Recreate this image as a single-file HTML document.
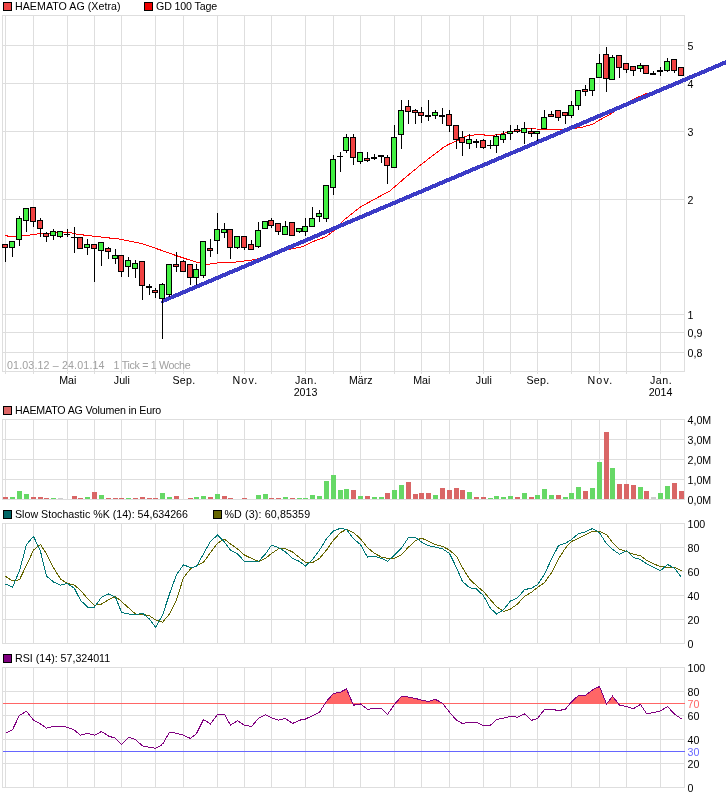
<!DOCTYPE html>
<html><head><meta charset="utf-8"><title>HAEMATO AG Chart</title>
<style>html,body{margin:0;padding:0;background:#fff}svg{display:block;will-change:transform}text{white-space:pre}</style></head>
<body>
<svg width="726" height="796" viewBox="0 0 726 796" shape-rendering="crispEdges" font-family="'Liberation Sans', Arial, sans-serif" font-size="10.67px">
<rect x="0" y="0" width="726" height="796" fill="#ffffff"/>
<g stroke="#dedede" stroke-width="1" fill="none"><line x1="5.5" y1="15.5" x2="5.5" y2="373.5"/><line x1="33.5" y1="15.5" x2="33.5" y2="373.5"/><line x1="67.5" y1="15.5" x2="67.5" y2="373.5"/><line x1="94.5" y1="15.5" x2="94.5" y2="373.5"/><line x1="121.5" y1="15.5" x2="121.5" y2="373.5"/><line x1="155.5" y1="15.5" x2="155.5" y2="373.5"/><line x1="183.5" y1="15.5" x2="183.5" y2="373.5"/><line x1="217.5" y1="15.5" x2="217.5" y2="373.5"/><line x1="244.5" y1="15.5" x2="244.5" y2="373.5"/><line x1="271.5" y1="15.5" x2="271.5" y2="373.5"/><line x1="305.5" y1="15.5" x2="305.5" y2="373.5"/><line x1="333.5" y1="15.5" x2="333.5" y2="373.5"/><line x1="360.5" y1="15.5" x2="360.5" y2="373.5"/><line x1="394.5" y1="15.5" x2="394.5" y2="373.5"/><line x1="421.5" y1="15.5" x2="421.5" y2="373.5"/><line x1="449.5" y1="15.5" x2="449.5" y2="373.5"/><line x1="483.5" y1="15.5" x2="483.5" y2="373.5"/><line x1="510.5" y1="15.5" x2="510.5" y2="373.5"/><line x1="537.5" y1="15.5" x2="537.5" y2="373.5"/><line x1="571.5" y1="15.5" x2="571.5" y2="373.5"/><line x1="599.5" y1="15.5" x2="599.5" y2="373.5"/><line x1="626.5" y1="15.5" x2="626.5" y2="373.5"/><line x1="660.5" y1="15.5" x2="660.5" y2="373.5"/><line x1="2.5" y1="45.5" x2="684.5" y2="45.5"/><line x1="2.5" y1="83.5" x2="684.5" y2="83.5"/><line x1="2.5" y1="131.5" x2="684.5" y2="131.5"/><line x1="2.5" y1="199.5" x2="684.5" y2="199.5"/><line x1="2.5" y1="314.5" x2="684.5" y2="314.5"/><line x1="2.5" y1="332.5" x2="684.5" y2="332.5"/><line x1="2.5" y1="352.5" x2="684.5" y2="352.5"/><rect x="2.5" y="15.5" width="682.0" height="356.0"/></g>
<text x="7" y="369" fill="#a0a0a0" textLength="97.5">01.03.12 – 24.01.14</text>
<text x="113.6" y="369" fill="#a0a0a0" textLength="77">1 Tick = 1 Woche</text>
<polyline fill="none" stroke="#ff0000" stroke-width="1" points="5.5,235.5 9.5,236.5 16.0,236.5 22.0,235.5 29.0,235.5 31.0,234.5 36.0,234.5 38.0,233.5 50.0,233.3 66.0,232.4 70.0,232.5 77.0,234.3 89.0,235.6 94.0,236.2 104.0,237.4 113.0,238.4 118.0,238.8 126.5,240.6 143.0,243.9 159.6,249.7 176.0,255.5 192.6,261.0 200.0,263.0 207.5,264.3 217.4,263.0 230.0,262.4 236.5,262.0 253.0,259.9 269.6,255.8 286.0,250.0 302.6,246.7 312.6,241.7 325.8,236.8 335.7,229.3 344.0,220.0 359.8,207.4 374.6,199.1 389.5,191.2 404.4,178.4 419.3,166.0 434.1,154.5 444.0,147.0 450.0,143.7 456.5,141.0 464.8,136.9 469.8,135.2 481.3,134.7 489.6,135.5 497.9,134.7 506.0,132.7 517.7,130.7 526.0,129.0 532.6,128.1 535.9,129.0 560.0,129.4 565.0,129.4 574.8,128.3 583.0,127.0 593.0,124.1 599.6,120.0 611.2,113.6 620.0,108.0 628.0,102.6 633.0,99.4 640.0,96.3 648.0,93.0 651.0,93.0 668.0,86.8 681.0,81.5"/>
<polygon fill="#3b3bc6" stroke="none" points="160.50,302.46 163.50,298.49 727.00,59.59 727.00,63.99 162.00,303.53"/>
<g stroke="#000000" stroke-width="1"><line x1="5.5" y1="244" x2="5.5" y2="262"/><rect x="2.5" y="244.5" width="5" height="3" fill="#f04242"/><line x1="12.5" y1="242" x2="12.5" y2="257"/><rect x="9.5" y="241.5" width="5" height="6" fill="#42f042"/><line x1="19.5" y1="216" x2="19.5" y2="246"/><rect x="16.5" y="218.5" width="5" height="21" fill="#42f042"/><line x1="26.5" y1="208" x2="26.5" y2="232"/><rect x="23.5" y="208.5" width="5" height="12" fill="#42f042"/><line x1="33.5" y1="207" x2="33.5" y2="227"/><rect x="30.5" y="207.5" width="5" height="14" fill="#f04242"/><line x1="40.5" y1="218" x2="40.5" y2="237"/><rect x="37.5" y="220.5" width="5" height="8" fill="#f04242"/><line x1="46.5" y1="232" x2="46.5" y2="242"/><rect x="43.5" y="233.5" width="5" height="3" fill="#f04242"/><line x1="53.5" y1="229" x2="53.5" y2="240"/><rect x="50.5" y="231.5" width="5" height="4" fill="#42f042"/><line x1="60.5" y1="232" x2="60.5" y2="238"/><rect x="57.5" y="231.5" width="5" height="5" fill="#42f042"/><line x1="67.5" y1="229" x2="67.5" y2="237"/><line x1="64.0" y1="234.5" x2="70.0" y2="234.5"/><line x1="74.5" y1="227" x2="74.5" y2="253"/><line x1="71.0" y1="237.5" x2="77.0" y2="237.5"/><line x1="80.5" y1="238" x2="80.5" y2="249"/><rect x="77.5" y="237.5" width="5" height="11" fill="#f04242"/><line x1="87.5" y1="239" x2="87.5" y2="255"/><rect x="84.5" y="244.5" width="5" height="3" fill="#42f042"/><line x1="94.5" y1="244" x2="94.5" y2="282"/><rect x="91.5" y="244.5" width="5" height="4" fill="#f04242"/><line x1="101.5" y1="242" x2="101.5" y2="266"/><rect x="98.5" y="242.5" width="5" height="8" fill="#42f042"/><line x1="108.5" y1="247" x2="108.5" y2="259"/><rect x="105.5" y="248.5" width="5" height="3" fill="#f04242"/><line x1="115.5" y1="249" x2="115.5" y2="264"/><rect x="112.5" y="255.5" width="5" height="3" fill="#42f042"/><line x1="121.5" y1="255" x2="121.5" y2="277"/><rect x="118.5" y="255.5" width="5" height="16" fill="#f04242"/><line x1="128.5" y1="257" x2="128.5" y2="277"/><rect x="125.5" y="260.5" width="5" height="6" fill="#42f042"/><line x1="135.5" y1="260" x2="135.5" y2="278"/><rect x="132.5" y="263.5" width="5" height="5" fill="#42f042"/><line x1="142.5" y1="261" x2="142.5" y2="300"/><rect x="139.5" y="261.5" width="5" height="24" fill="#f04242"/><line x1="149.5" y1="284" x2="149.5" y2="295"/><line x1="146.0" y1="287" x2="152.0" y2="287" stroke-width="2"/><line x1="155.5" y1="288" x2="155.5" y2="298"/><rect x="152.5" y="290.5" width="5" height="2" fill="#f04242"/><line x1="162.5" y1="283" x2="162.5" y2="339"/><rect x="159.5" y="284.5" width="5" height="14" fill="#42f042"/><line x1="169.5" y1="264" x2="169.5" y2="297"/><rect x="166.5" y="264.5" width="5" height="30" fill="#42f042"/><line x1="176.5" y1="252" x2="176.5" y2="272"/><rect x="173.5" y="264.5" width="5" height="2" fill="#f04242"/><line x1="183.5" y1="260" x2="183.5" y2="272"/><rect x="180.5" y="261.5" width="5" height="10" fill="#f04242"/><line x1="190.5" y1="264" x2="190.5" y2="285"/><rect x="187.5" y="264.5" width="5" height="13" fill="#f04242"/><line x1="196.5" y1="264" x2="196.5" y2="285"/><rect x="193.5" y="269.5" width="5" height="8" fill="#42f042"/><line x1="203.5" y1="241" x2="203.5" y2="278"/><rect x="200.5" y="241.5" width="5" height="34" fill="#42f042"/><line x1="210.5" y1="239" x2="210.5" y2="257"/><rect x="207.5" y="248.5" width="5" height="2" fill="#f04242"/><line x1="217.5" y1="213" x2="217.5" y2="254"/><rect x="214.5" y="229.5" width="5" height="11" fill="#42f042"/><line x1="224.5" y1="223" x2="224.5" y2="238"/><rect x="221.5" y="229.5" width="5" height="3" fill="#42f042"/><line x1="230.5" y1="229" x2="230.5" y2="259"/><rect x="227.5" y="229.5" width="5" height="18" fill="#f04242"/><line x1="237.5" y1="236" x2="237.5" y2="249"/><rect x="234.5" y="236.5" width="5" height="11" fill="#42f042"/><line x1="244.5" y1="236" x2="244.5" y2="250"/><rect x="241.5" y="236.5" width="5" height="11" fill="#f04242"/><line x1="251.5" y1="240" x2="251.5" y2="250"/><rect x="248.5" y="244.5" width="5" height="5" fill="#f04242"/><line x1="258.5" y1="222" x2="258.5" y2="248"/><rect x="255.5" y="230.5" width="5" height="16" fill="#42f042"/><line x1="265.5" y1="221" x2="265.5" y2="229"/><rect x="262.5" y="221.5" width="5" height="7" fill="#42f042"/><line x1="271.5" y1="218" x2="271.5" y2="228"/><rect x="268.5" y="220.5" width="5" height="5" fill="#f04242"/><line x1="278.5" y1="224" x2="278.5" y2="235"/><rect x="275.5" y="223.5" width="5" height="8" fill="#f04242"/><line x1="285.5" y1="221" x2="285.5" y2="234"/><rect x="282.5" y="226.5" width="5" height="8" fill="#42f042"/><line x1="292.5" y1="222" x2="292.5" y2="236"/><rect x="289.5" y="222.5" width="5" height="13" fill="#f04242"/><line x1="299.5" y1="228" x2="299.5" y2="233"/><rect x="296.5" y="228.5" width="5" height="3" fill="#42f042"/><line x1="305.5" y1="218" x2="305.5" y2="236"/><rect x="302.5" y="226.5" width="5" height="5" fill="#42f042"/><line x1="312.5" y1="207" x2="312.5" y2="226"/><rect x="309.5" y="218.5" width="5" height="8" fill="#42f042"/><line x1="319.5" y1="210" x2="319.5" y2="222"/><rect x="316.5" y="213.5" width="5" height="3" fill="#42f042"/><line x1="326.5" y1="185" x2="326.5" y2="222"/><rect x="323.5" y="185.5" width="5" height="33" fill="#42f042"/><line x1="333.5" y1="155" x2="333.5" y2="195"/><rect x="330.5" y="159.5" width="5" height="28" fill="#42f042"/><line x1="340.5" y1="152" x2="340.5" y2="172"/><line x1="337.0" y1="156.5" x2="343.0" y2="156.5"/><line x1="346.5" y1="134" x2="346.5" y2="153"/><rect x="343.5" y="137.5" width="5" height="13" fill="#42f042"/><line x1="353.5" y1="134" x2="353.5" y2="165"/><rect x="350.5" y="137.5" width="5" height="20" fill="#f04242"/><line x1="360.5" y1="152" x2="360.5" y2="164"/><rect x="357.5" y="152.5" width="5" height="9" fill="#42f042"/><line x1="367.5" y1="152" x2="367.5" y2="162"/><rect x="364.5" y="158.5" width="5" height="2" fill="#f04242"/><line x1="374.5" y1="154" x2="374.5" y2="160"/><line x1="371.0" y1="158" x2="377.0" y2="158" stroke-width="2"/><line x1="381.5" y1="156" x2="381.5" y2="163"/><line x1="378.0" y1="156" x2="384.0" y2="156" stroke-width="2"/><line x1="387.5" y1="155" x2="387.5" y2="184"/><rect x="384.5" y="157.5" width="5" height="8" fill="#f04242"/><line x1="394.5" y1="125" x2="394.5" y2="167"/><rect x="391.5" y="137.5" width="5" height="30" fill="#42f042"/><line x1="401.5" y1="100" x2="401.5" y2="149"/><rect x="398.5" y="110.5" width="5" height="24" fill="#42f042"/><line x1="408.5" y1="100" x2="408.5" y2="124"/><rect x="405.5" y="106.5" width="5" height="5" fill="#f04242"/><line x1="415.5" y1="109" x2="415.5" y2="124"/><rect x="412.5" y="110.5" width="5" height="2" fill="#f04242"/><line x1="421.5" y1="107" x2="421.5" y2="123"/><rect x="418.5" y="112.5" width="5" height="3" fill="#f04242"/><line x1="428.5" y1="100" x2="428.5" y2="121"/><line x1="425.0" y1="116" x2="431.0" y2="116" stroke-width="2"/><line x1="435.5" y1="110" x2="435.5" y2="119"/><rect x="432.5" y="112.5" width="5" height="3" fill="#42f042"/><line x1="442.5" y1="108" x2="442.5" y2="124"/><line x1="439.0" y1="116" x2="445.0" y2="116" stroke-width="2"/><line x1="449.5" y1="110" x2="449.5" y2="132"/><rect x="446.5" y="114.5" width="5" height="11" fill="#f04242"/><line x1="456.5" y1="126" x2="456.5" y2="149"/><rect x="453.5" y="125.5" width="5" height="14" fill="#f04242"/><line x1="462.5" y1="131" x2="462.5" y2="156"/><rect x="459.5" y="137.5" width="5" height="5" fill="#f04242"/><line x1="469.5" y1="134" x2="469.5" y2="149"/><rect x="466.5" y="139.5" width="5" height="4" fill="#42f042"/><line x1="476.5" y1="139" x2="476.5" y2="148"/><line x1="473.0" y1="142" x2="479.0" y2="142" stroke-width="2"/><line x1="483.5" y1="139" x2="483.5" y2="149"/><rect x="480.5" y="140.5" width="5" height="7" fill="#f04242"/><line x1="490.5" y1="140" x2="490.5" y2="149"/><line x1="487.0" y1="145.5" x2="493.0" y2="145.5"/><line x1="496.5" y1="134" x2="496.5" y2="153"/><rect x="493.5" y="136.5" width="5" height="9" fill="#42f042"/><line x1="503.5" y1="131" x2="503.5" y2="143"/><rect x="500.5" y="134.5" width="5" height="5" fill="#42f042"/><line x1="510.5" y1="125" x2="510.5" y2="140"/><rect x="507.5" y="131.5" width="5" height="2" fill="#42f042"/><line x1="517.5" y1="125" x2="517.5" y2="133"/><rect x="514.5" y="129.5" width="5" height="2" fill="#f04242"/><line x1="524.5" y1="122" x2="524.5" y2="144"/><rect x="521.5" y="128.5" width="5" height="4" fill="#42f042"/><line x1="531.5" y1="128" x2="531.5" y2="137"/><rect x="528.5" y="131.5" width="5" height="2" fill="#f04242"/><line x1="537.5" y1="131" x2="537.5" y2="141"/><rect x="534.5" y="131.5" width="5" height="2" fill="#42f042"/><line x1="544.5" y1="110" x2="544.5" y2="128"/><rect x="541.5" y="117.5" width="5" height="11" fill="#42f042"/><line x1="551.5" y1="111" x2="551.5" y2="116"/><rect x="548.5" y="114.5" width="5" height="2" fill="#f04242"/><line x1="558.5" y1="110" x2="558.5" y2="121"/><rect x="555.5" y="110.5" width="5" height="7" fill="#f04242"/><line x1="565.5" y1="113" x2="565.5" y2="124"/><rect x="562.5" y="112.5" width="5" height="3" fill="#f04242"/><line x1="571.5" y1="101" x2="571.5" y2="118"/><rect x="568.5" y="105.5" width="5" height="10" fill="#42f042"/><line x1="578.5" y1="91" x2="578.5" y2="110"/><rect x="575.5" y="90.5" width="5" height="15" fill="#42f042"/><line x1="585.5" y1="85" x2="585.5" y2="96"/><rect x="582.5" y="89.5" width="5" height="2" fill="#f04242"/><line x1="592.5" y1="78" x2="592.5" y2="96"/><rect x="589.5" y="78.5" width="5" height="12" fill="#42f042"/><line x1="599.5" y1="54" x2="599.5" y2="77"/><rect x="596.5" y="63.5" width="5" height="14" fill="#42f042"/><line x1="606.5" y1="47" x2="606.5" y2="92"/><rect x="603.5" y="54.5" width="5" height="24" fill="#f04242"/><line x1="612.5" y1="55" x2="612.5" y2="79"/><rect x="609.5" y="57.5" width="5" height="22" fill="#42f042"/><line x1="619.5" y1="55" x2="619.5" y2="78"/><rect x="616.5" y="55.5" width="5" height="12" fill="#f04242"/><line x1="626.5" y1="64" x2="626.5" y2="73"/><rect x="623.5" y="63.5" width="5" height="6" fill="#f04242"/><line x1="633.5" y1="67" x2="633.5" y2="76"/><rect x="630.5" y="66.5" width="5" height="4" fill="#f04242"/><line x1="640.5" y1="63" x2="640.5" y2="72"/><rect x="637.5" y="65.5" width="5" height="3" fill="#42f042"/><line x1="646.5" y1="66" x2="646.5" y2="74"/><rect x="643.5" y="65.5" width="5" height="8" fill="#f04242"/><line x1="653.5" y1="71" x2="653.5" y2="74"/><line x1="650.0" y1="74" x2="656.0" y2="74" stroke-width="2"/><line x1="660.5" y1="67" x2="660.5" y2="76"/><line x1="657.0" y1="71" x2="663.0" y2="71" stroke-width="2"/><line x1="667.5" y1="58" x2="667.5" y2="72"/><rect x="664.5" y="61.5" width="5" height="9" fill="#42f042"/><line x1="674.5" y1="59" x2="674.5" y2="73"/><rect x="671.5" y="59.5" width="5" height="11" fill="#f04242"/><line x1="681.5" y1="67" x2="681.5" y2="76"/><rect x="678.5" y="67.5" width="5" height="8" fill="#f04242"/></g>
<rect x="3.5" y="2.5" width="8" height="8" fill="#ee4444" stroke="#000"/>
<text x="15" y="10" textLength="105.5">HAEMATO AG (Xetra)</text>
<rect x="144.5" y="2.5" width="8" height="8" fill="#ee0000" stroke="#000"/>
<text x="156" y="10" textLength="61.2">GD 100 Tage</text>
<text x="687.5" y="50.0">5</text>
<text x="687.5" y="88.0">4</text>
<text x="687.5" y="136.0">3</text>
<text x="687.5" y="204.0">2</text>
<text x="687.5" y="319.0">1</text>
<text x="687.5" y="337.0">0,9</text>
<text x="687.5" y="357.0">0,8</text>
<text x="67.8" y="384" text-anchor="middle">Mai</text>
<text x="121.8" y="384" text-anchor="middle">Juli</text>
<text x="183.8" y="384" text-anchor="middle" textLength="22.6">Sep.</text>
<text x="244.8" y="384" text-anchor="middle" textLength="24.6">Nov.</text>
<text x="305.8" y="384" text-anchor="middle" textLength="21.8">Jan.</text>
<text x="360.8" y="384" text-anchor="middle">März</text>
<text x="421.8" y="384" text-anchor="middle">Mai</text>
<text x="483.8" y="384" text-anchor="middle">Juli</text>
<text x="537.8" y="384" text-anchor="middle" textLength="22.6">Sep.</text>
<text x="599.8" y="384" text-anchor="middle" textLength="24.6">Nov.</text>
<text x="660.8" y="384" text-anchor="middle" textLength="21.8">Jan.</text>
<text x="305.5" y="396" text-anchor="middle">2013</text>
<text x="660.5" y="396" text-anchor="middle">2014</text>
<rect x="3.5" y="406.5" width="8" height="8" fill="#dd6666" stroke="#000"/>
<text x="15" y="414" textLength="146.3">HAEMATO AG Volumen in Euro</text>
<g stroke="#dedede" stroke-width="1" fill="none"><line x1="5.5" y1="419.5" x2="5.5" y2="499.5"/><line x1="33.5" y1="419.5" x2="33.5" y2="499.5"/><line x1="67.5" y1="419.5" x2="67.5" y2="499.5"/><line x1="94.5" y1="419.5" x2="94.5" y2="499.5"/><line x1="121.5" y1="419.5" x2="121.5" y2="499.5"/><line x1="155.5" y1="419.5" x2="155.5" y2="499.5"/><line x1="183.5" y1="419.5" x2="183.5" y2="499.5"/><line x1="217.5" y1="419.5" x2="217.5" y2="499.5"/><line x1="244.5" y1="419.5" x2="244.5" y2="499.5"/><line x1="271.5" y1="419.5" x2="271.5" y2="499.5"/><line x1="305.5" y1="419.5" x2="305.5" y2="499.5"/><line x1="333.5" y1="419.5" x2="333.5" y2="499.5"/><line x1="360.5" y1="419.5" x2="360.5" y2="499.5"/><line x1="394.5" y1="419.5" x2="394.5" y2="499.5"/><line x1="421.5" y1="419.5" x2="421.5" y2="499.5"/><line x1="449.5" y1="419.5" x2="449.5" y2="499.5"/><line x1="483.5" y1="419.5" x2="483.5" y2="499.5"/><line x1="510.5" y1="419.5" x2="510.5" y2="499.5"/><line x1="537.5" y1="419.5" x2="537.5" y2="499.5"/><line x1="571.5" y1="419.5" x2="571.5" y2="499.5"/><line x1="599.5" y1="419.5" x2="599.5" y2="499.5"/><line x1="626.5" y1="419.5" x2="626.5" y2="499.5"/><line x1="660.5" y1="419.5" x2="660.5" y2="499.5"/><line x1="2.5" y1="439.5" x2="684.5" y2="439.5"/><line x1="2.5" y1="459.5" x2="684.5" y2="459.5"/><line x1="2.5" y1="479.5" x2="684.5" y2="479.5"/><rect x="2.5" y="419.5" width="682.0" height="80.0"/></g>
<g stroke="none"><rect x="3" y="497" width="5" height="2" fill="#d96666"/><rect x="10" y="497" width="5" height="2" fill="#66d866"/><rect x="17" y="491" width="5" height="8" fill="#66d866"/><rect x="24" y="494" width="5" height="5" fill="#66d866"/><rect x="31" y="497" width="5" height="2" fill="#d96666"/><rect x="38" y="497" width="5" height="2" fill="#d96666"/><rect x="44" y="498" width="5" height="1" fill="#d96666"/><rect x="51" y="498" width="5" height="1" fill="#66d866"/><rect x="58" y="498" width="5" height="1" fill="#cccccc"/><rect x="72" y="496" width="5" height="3" fill="#d96666"/><rect x="78" y="498" width="5" height="1" fill="#d96666"/><rect x="85" y="497" width="5" height="2" fill="#66d866"/><rect x="92" y="492" width="5" height="7" fill="#d96666"/><rect x="99" y="495" width="5" height="4" fill="#66d866"/><rect x="106" y="498" width="5" height="1" fill="#d96666"/><rect x="113" y="498" width="5" height="1" fill="#d96666"/><rect x="119" y="498" width="5" height="1" fill="#d96666"/><rect x="126" y="498" width="5" height="1" fill="#66d866"/><rect x="133" y="498" width="5" height="1" fill="#d96666"/><rect x="140" y="497" width="5" height="2" fill="#d96666"/><rect x="147" y="498" width="5" height="1" fill="#d96666"/><rect x="153" y="498" width="5" height="1" fill="#d96666"/><rect x="160" y="493" width="5" height="6" fill="#66d866"/><rect x="167" y="497" width="5" height="2" fill="#66d866"/><rect x="174" y="496" width="5" height="3" fill="#d96666"/><rect x="188" y="498" width="5" height="1" fill="#d96666"/><rect x="194" y="497" width="5" height="2" fill="#66d866"/><rect x="201" y="496" width="5" height="3" fill="#66d866"/><rect x="208" y="497" width="5" height="2" fill="#d96666"/><rect x="215" y="494" width="5" height="5" fill="#66d866"/><rect x="222" y="496" width="5" height="3" fill="#d96666"/><rect x="228" y="498" width="5" height="1" fill="#d96666"/><rect x="242" y="498" width="5" height="1" fill="#d96666"/><rect x="256" y="495" width="5" height="4" fill="#66d866"/><rect x="263" y="494" width="5" height="5" fill="#66d866"/><rect x="269" y="498" width="5" height="1" fill="#d96666"/><rect x="276" y="498" width="5" height="1" fill="#d96666"/><rect x="283" y="497" width="5" height="2" fill="#66d866"/><rect x="290" y="498" width="5" height="1" fill="#d96666"/><rect x="297" y="498" width="5" height="1" fill="#66d866"/><rect x="303" y="498" width="5" height="1" fill="#66d866"/><rect x="310" y="495" width="5" height="4" fill="#66d866"/><rect x="317" y="496" width="5" height="3" fill="#66d866"/><rect x="324" y="481" width="5" height="18" fill="#66d866"/><rect x="331" y="475" width="5" height="24" fill="#66d866"/><rect x="338" y="490" width="5" height="9" fill="#66d866"/><rect x="344" y="489" width="5" height="10" fill="#66d866"/><rect x="351" y="490" width="5" height="9" fill="#d96666"/><rect x="358" y="496" width="5" height="3" fill="#66d866"/><rect x="365" y="496" width="5" height="3" fill="#d96666"/><rect x="372" y="497" width="5" height="2" fill="#66d866"/><rect x="379" y="497" width="5" height="2" fill="#66d866"/><rect x="385" y="493" width="5" height="6" fill="#d96666"/><rect x="392" y="490" width="5" height="9" fill="#66d866"/><rect x="399" y="485" width="5" height="14" fill="#66d866"/><rect x="406" y="482" width="5" height="17" fill="#d96666"/><rect x="413" y="494" width="5" height="5" fill="#d96666"/><rect x="419" y="493" width="5" height="6" fill="#d96666"/><rect x="426" y="493" width="5" height="6" fill="#d96666"/><rect x="433" y="495" width="5" height="4" fill="#66d866"/><rect x="440" y="488" width="5" height="11" fill="#d96666"/><rect x="447" y="490" width="5" height="9" fill="#d96666"/><rect x="454" y="488" width="5" height="11" fill="#d96666"/><rect x="460" y="490" width="5" height="9" fill="#d96666"/><rect x="467" y="492" width="5" height="7" fill="#66d866"/><rect x="474" y="497" width="5" height="2" fill="#d96666"/><rect x="481" y="497" width="5" height="2" fill="#d96666"/><rect x="488" y="498" width="5" height="1" fill="#66d866"/><rect x="494" y="496" width="5" height="3" fill="#66d866"/><rect x="501" y="497" width="5" height="2" fill="#66d866"/><rect x="508" y="496" width="5" height="3" fill="#66d866"/><rect x="515" y="497" width="5" height="2" fill="#d96666"/><rect x="522" y="493" width="5" height="6" fill="#66d866"/><rect x="529" y="497" width="5" height="2" fill="#d96666"/><rect x="535" y="495" width="5" height="4" fill="#66d866"/><rect x="542" y="489" width="5" height="10" fill="#66d866"/><rect x="549" y="495" width="5" height="4" fill="#66d866"/><rect x="556" y="495" width="5" height="4" fill="#d96666"/><rect x="563" y="497" width="5" height="2" fill="#66d866"/><rect x="569" y="493" width="5" height="6" fill="#66d866"/><rect x="576" y="487" width="5" height="12" fill="#66d866"/><rect x="583" y="491" width="5" height="8" fill="#d96666"/><rect x="590" y="488" width="5" height="11" fill="#66d866"/><rect x="597" y="462" width="5" height="37" fill="#66d866"/><rect x="604" y="432" width="5" height="67" fill="#d96666"/><rect x="610" y="468" width="5" height="31" fill="#66d866"/><rect x="617" y="484" width="5" height="15" fill="#d96666"/><rect x="624" y="484" width="5" height="15" fill="#d96666"/><rect x="631" y="485" width="5" height="14" fill="#d96666"/><rect x="638" y="487" width="5" height="12" fill="#66d866"/><rect x="644" y="491" width="5" height="8" fill="#d96666"/><rect x="651" y="497" width="5" height="2" fill="#cccccc"/><rect x="658" y="493" width="5" height="6" fill="#66d866"/><rect x="665" y="486" width="5" height="13" fill="#66d866"/><rect x="672" y="483" width="5" height="16" fill="#d96666"/><rect x="679" y="491" width="5" height="8" fill="#d96666"/></g>
<text x="687.5" y="424.0">4,0M</text>
<text x="687.5" y="444.0">3,0M</text>
<text x="687.5" y="464.0">2,0M</text>
<text x="687.5" y="484.0">1,0M</text>
<text x="687.5" y="504.0">0,0M</text>
<rect x="3.5" y="510.5" width="8" height="8" fill="#006666" stroke="#000"/>
<text x="15" y="518">Slow Stochastic %K (14): 54,634266</text>
<rect x="213.5" y="510.5" width="8" height="8" fill="#666600" stroke="#000"/>
<text x="224.5" y="518" textLength="85.6">%D (3): 60,85359</text>
<g stroke="#dedede" stroke-width="1" fill="none"><line x1="5.5" y1="523.5" x2="5.5" y2="643.5"/><line x1="33.5" y1="523.5" x2="33.5" y2="643.5"/><line x1="67.5" y1="523.5" x2="67.5" y2="643.5"/><line x1="94.5" y1="523.5" x2="94.5" y2="643.5"/><line x1="121.5" y1="523.5" x2="121.5" y2="643.5"/><line x1="155.5" y1="523.5" x2="155.5" y2="643.5"/><line x1="183.5" y1="523.5" x2="183.5" y2="643.5"/><line x1="217.5" y1="523.5" x2="217.5" y2="643.5"/><line x1="244.5" y1="523.5" x2="244.5" y2="643.5"/><line x1="271.5" y1="523.5" x2="271.5" y2="643.5"/><line x1="305.5" y1="523.5" x2="305.5" y2="643.5"/><line x1="333.5" y1="523.5" x2="333.5" y2="643.5"/><line x1="360.5" y1="523.5" x2="360.5" y2="643.5"/><line x1="394.5" y1="523.5" x2="394.5" y2="643.5"/><line x1="421.5" y1="523.5" x2="421.5" y2="643.5"/><line x1="449.5" y1="523.5" x2="449.5" y2="643.5"/><line x1="483.5" y1="523.5" x2="483.5" y2="643.5"/><line x1="510.5" y1="523.5" x2="510.5" y2="643.5"/><line x1="537.5" y1="523.5" x2="537.5" y2="643.5"/><line x1="571.5" y1="523.5" x2="571.5" y2="643.5"/><line x1="599.5" y1="523.5" x2="599.5" y2="643.5"/><line x1="626.5" y1="523.5" x2="626.5" y2="643.5"/><line x1="660.5" y1="523.5" x2="660.5" y2="643.5"/><line x1="2.5" y1="547.5" x2="684.5" y2="547.5"/><line x1="2.5" y1="571.5" x2="684.5" y2="571.5"/><line x1="2.5" y1="595.5" x2="684.5" y2="595.5"/><line x1="2.5" y1="619.5" x2="684.5" y2="619.5"/><rect x="2.5" y="523.5" width="682.0" height="120.0"/></g>
<polyline fill="none" stroke="#666600" stroke-width="1" points="5.5,576.4 12.5,581.0 19.5,579.7 26.5,565.2 33.5,550.1 40.5,544.4 46.5,553.9 53.5,567.7 60.5,579.0 67.5,583.5 74.5,585.2 80.5,590.2 87.5,598.5 94.5,605.3 101.5,604.0 108.5,599.8 115.5,596.5 121.5,601.5 128.5,607.8 135.5,614.0 142.5,614.0 149.5,615.8 155.5,619.8 162.5,622.3 169.5,614.0 176.5,599.8 183.5,577.7 190.5,568.9 196.5,565.9 203.5,562.2 210.5,552.6 217.5,543.1 224.5,539.3 230.5,543.9 237.5,548.9 244.5,555.1 251.5,558.4 258.5,561.4 265.5,558.4 271.5,553.4 278.5,548.9 285.5,548.9 292.5,551.9 299.5,557.6 305.5,562.2 312.5,562.7 319.5,558.4 326.5,550.1 333.5,540.1 340.5,532.6 346.5,529.3 353.5,532.6 360.5,538.8 367.5,547.6 374.5,553.4 381.5,557.1 387.5,558.4 394.5,558.1 401.5,554.6 408.5,547.1 415.5,540.8 421.5,538.1 428.5,541.3 435.5,544.6 442.5,546.4 449.5,550.1 456.5,556.4 462.5,567.7 469.5,579.0 476.5,585.7 483.5,591.5 490.5,599.8 496.5,606.5 503.5,611.5 510.5,609.0 517.5,604.0 524.5,596.5 531.5,592.2 537.5,587.5 544.5,582.5 551.5,572.8 558.5,559.0 565.5,547.9 571.5,541.5 578.5,538.2 585.5,534.9 592.5,531.3 599.5,531.3 606.5,534.6 612.5,542.4 619.5,549.3 626.5,551.5 633.5,554.3 640.5,555.7 646.5,560.4 653.5,563.7 660.5,566.7 667.5,567.3 674.5,567.3 681.5,570.6"/>
<polyline fill="none" stroke="#007777" stroke-width="1" points="5.5,584.0 12.5,587.2 19.5,570.7 26.5,544.6 33.5,536.3 40.5,551.4 46.5,576.0 53.5,582.0 60.5,585.2 67.5,583.5 74.5,588.5 80.5,600.3 87.5,607.0 94.5,607.0 101.5,597.3 108.5,594.0 115.5,597.3 121.5,612.3 128.5,614.0 135.5,614.8 142.5,613.3 149.5,619.1 155.5,627.3 162.5,615.3 169.5,594.0 176.5,574.7 183.5,564.7 190.5,567.7 196.5,566.4 203.5,553.9 210.5,541.3 217.5,535.1 224.5,542.1 230.5,550.1 237.5,553.9 244.5,561.4 251.5,561.4 258.5,561.4 265.5,553.9 271.5,545.1 278.5,547.6 285.5,551.9 292.5,558.4 299.5,561.4 305.5,565.9 312.5,559.7 319.5,550.1 326.5,538.8 333.5,530.8 340.5,528.3 346.5,529.6 353.5,538.8 360.5,544.6 367.5,557.1 374.5,556.4 381.5,558.4 387.5,561.4 394.5,555.1 401.5,548.1 408.5,537.6 415.5,537.6 421.5,542.1 428.5,545.6 435.5,547.1 442.5,548.9 449.5,553.4 456.5,567.7 462.5,581.5 469.5,587.7 476.5,589.0 483.5,595.7 490.5,608.3 496.5,614.0 503.5,609.8 510.5,601.0 517.5,597.8 524.5,589.7 531.5,588.1 537.5,584.7 544.5,574.2 551.5,559.0 558.5,545.7 565.5,543.2 571.5,539.6 578.5,533.5 585.5,531.9 592.5,528.5 599.5,532.7 606.5,543.8 612.5,549.3 619.5,554.3 626.5,550.7 633.5,557.6 640.5,559.5 646.5,563.7 653.5,567.3 660.5,570.6 667.5,564.5 674.5,568.1 681.5,577.5"/>
<text x="687.5" y="528.0">100</text>
<text x="687.5" y="552.0">80</text>
<text x="687.5" y="576.0">60</text>
<text x="687.5" y="600.0">40</text>
<text x="687.5" y="624.0">20</text>
<text x="687.5" y="648.0">0</text>
<rect x="3.5" y="654.5" width="8" height="8" fill="#800080" stroke="#000"/>
<text x="15" y="662">RSI (14): 57,324011</text>
<g stroke="#dedede" stroke-width="1" fill="none"><line x1="5.5" y1="667.5" x2="5.5" y2="787.5"/><line x1="33.5" y1="667.5" x2="33.5" y2="787.5"/><line x1="67.5" y1="667.5" x2="67.5" y2="787.5"/><line x1="94.5" y1="667.5" x2="94.5" y2="787.5"/><line x1="121.5" y1="667.5" x2="121.5" y2="787.5"/><line x1="155.5" y1="667.5" x2="155.5" y2="787.5"/><line x1="183.5" y1="667.5" x2="183.5" y2="787.5"/><line x1="217.5" y1="667.5" x2="217.5" y2="787.5"/><line x1="244.5" y1="667.5" x2="244.5" y2="787.5"/><line x1="271.5" y1="667.5" x2="271.5" y2="787.5"/><line x1="305.5" y1="667.5" x2="305.5" y2="787.5"/><line x1="333.5" y1="667.5" x2="333.5" y2="787.5"/><line x1="360.5" y1="667.5" x2="360.5" y2="787.5"/><line x1="394.5" y1="667.5" x2="394.5" y2="787.5"/><line x1="421.5" y1="667.5" x2="421.5" y2="787.5"/><line x1="449.5" y1="667.5" x2="449.5" y2="787.5"/><line x1="483.5" y1="667.5" x2="483.5" y2="787.5"/><line x1="510.5" y1="667.5" x2="510.5" y2="787.5"/><line x1="537.5" y1="667.5" x2="537.5" y2="787.5"/><line x1="571.5" y1="667.5" x2="571.5" y2="787.5"/><line x1="599.5" y1="667.5" x2="599.5" y2="787.5"/><line x1="626.5" y1="667.5" x2="626.5" y2="787.5"/><line x1="660.5" y1="667.5" x2="660.5" y2="787.5"/><line x1="2.5" y1="691.5" x2="684.5" y2="691.5"/><line x1="2.5" y1="715.5" x2="684.5" y2="715.5"/><line x1="2.5" y1="739.5" x2="684.5" y2="739.5"/><line x1="2.5" y1="763.5" x2="684.5" y2="763.5"/><rect x="2.5" y="667.5" width="682.0" height="120.0"/></g>
<polygon fill="#ff6666" stroke="none" points="325.1,703.5 326.5,701.4 333.5,693.4 340.5,692.1 346.5,688.9 352.8,703.5"/>
<polygon fill="#ff6666" stroke="none" points="395.3,703.5 401.5,696.4 408.5,697.1 415.5,698.4 421.5,700.2 428.5,701.4 435.5,699.4 442.5,703.2 442.8,703.5"/>
<polygon fill="#ff6666" stroke="none" points="570.1,703.5 571.5,701.8 578.5,695.4 585.5,695.4 592.5,689.9 599.5,686.5 606.3,703.5"/>
<polygon fill="#ff6666" stroke="none" points="606.9,703.5 612.5,696.2 618.3,703.5"/>
<line x1="2.5" y1="703.5" x2="684.5" y2="703.5" stroke="#ff6666"/>
<line x1="2.5" y1="751.5" x2="684.5" y2="751.5" stroke="#6666ff"/>
<polyline fill="none" stroke="#800080" stroke-width="1" points="5.5,733.2 12.5,729.7 19.5,715.2 26.5,711.4 33.5,720.2 40.5,724.0 46.5,728.2 53.5,726.5 60.5,726.5 67.5,727.2 74.5,730.2 80.5,735.2 87.5,733.2 94.5,735.2 101.5,731.5 108.5,736.0 115.5,738.3 121.5,744.5 128.5,737.3 135.5,739.5 142.5,746.0 149.5,747.3 155.5,748.3 162.5,744.5 169.5,732.2 176.5,733.2 183.5,735.2 190.5,738.5 196.5,733.5 203.5,719.5 210.5,724.0 217.5,714.4 224.5,714.4 230.5,725.2 237.5,720.7 244.5,725.2 251.5,726.5 258.5,718.2 265.5,714.7 271.5,717.7 278.5,720.2 285.5,718.5 292.5,723.5 299.5,720.2 305.5,719.0 312.5,715.7 319.5,712.2 326.5,701.4 333.5,693.4 340.5,692.1 346.5,688.9 353.5,705.2 360.5,703.9 367.5,709.4 374.5,708.2 381.5,708.2 387.5,714.4 394.5,704.4 401.5,696.4 408.5,697.1 415.5,698.4 421.5,700.2 428.5,701.4 435.5,699.4 442.5,703.2 449.5,712.2 456.5,720.2 462.5,723.5 469.5,722.2 476.5,722.2 483.5,726.0 490.5,725.2 496.5,719.5 503.5,718.2 510.5,716.4 517.5,717.2 524.5,713.9 531.5,720.3 537.5,718.4 544.5,709.5 551.5,709.2 558.5,710.6 565.5,709.2 571.5,701.8 578.5,695.4 585.5,695.4 592.5,689.9 599.5,686.5 606.5,704.0 612.5,696.2 619.5,705.1 626.5,706.5 633.5,708.7 640.5,704.5 646.5,713.4 653.5,712.8 660.5,710.9 667.5,706.5 674.5,714.2 681.5,718.9"/>
<text x="687.5" y="672.0" fill="#000">100</text>
<text x="687.5" y="696.0" fill="#000">80</text>
<text x="687.5" y="708.0" fill="#ff6666">70</text>
<text x="687.5" y="720.0" fill="#000">60</text>
<text x="687.5" y="744.0" fill="#000">40</text>
<text x="687.5" y="756.0" fill="#6666ff">30</text>
<text x="687.5" y="768.0" fill="#000">20</text>
<text x="687.5" y="792.0" fill="#000">0</text>
</svg>
</body></html>
